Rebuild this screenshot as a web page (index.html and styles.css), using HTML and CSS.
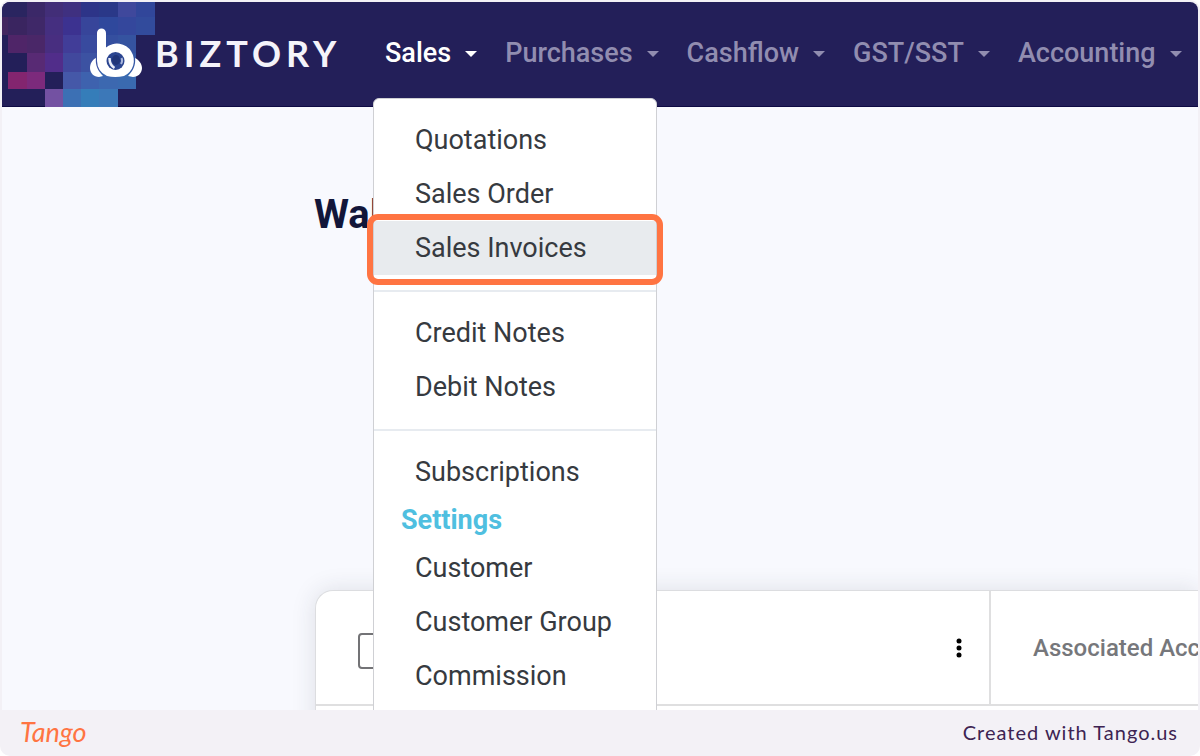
FILE: index.html
```html
<!DOCTYPE html>
<html lang="en">
<head>
<meta charset="utf-8">
<title>Biztory</title>
<meta name="viewport" content="width=device-width, initial-scale=1">
<link rel="stylesheet" href="styles.css">
</head>
<body>
<div class="frame">
  <div class="app">
    <header class="topbar">
      <a class="brand" href="#" aria-label="Biztory home">
        <svg class="brand-art" width="153" height="105" viewBox="2 2 153 105" aria-hidden="true">
          <g shape-rendering="crispEdges">
            <path fill="#2a2560" d="M2 2h25v15H2z"/><path fill="#3b2868" d="M27 2h18v15H27z"/><path fill="#422e78" d="M45 2h18v15H45z"/><path fill="#3f3080" d="M63 2h18v15H63z"/><path fill="#2d3488" d="M81 2h18v15H81z"/><path fill="#2a3888" d="M99 2h19v15H99z"/><path fill="#3f489c" d="M118 2h18v15h-18z"/><path fill="#31469a" d="M136 2h19v15h-19z"/>
            <path fill="#43265f" d="M2 17h6v18H2z"/><path fill="#3a2560" d="M8 17h19v18H8z"/><path fill="#3f2868" d="M27 17h18v18H27z"/><path fill="#452f80" d="M45 17h18v18H45z"/><path fill="#3c3290" d="M63 17h18v18H63z"/><path fill="#37459a" d="M81 17h18v18H81z"/><path fill="#2f489c" d="M99 17h19v18H99z"/><path fill="#34479c" d="M118 17h18v18h-18z"/><path fill="#324b9c" d="M136 17h19v18h-19z"/>
            <path fill="#4f2568" d="M8 35h19v18H8z"/><path fill="#4a2768" d="M27 35h18v18H27z"/><path fill="#482e80" d="M45 35h18v18H45z"/><path fill="#413d98" d="M63 35h18v18H63z"/><path fill="#384a9e" d="M81 35h18v18H81z"/><path fill="#354f9f" d="M99 35h19v18H99z"/><path fill="#3553a0" d="M118 35h18v18h-18z"/>
            <path fill="#582a74" d="M27 53h18v19H27z"/><path fill="#512d8a" d="M45 53h18v19H45z"/><path fill="#41489d" d="M63 53h18v19H63z"/><path fill="#3c52a2" d="M81 53h18v19H81z"/><path fill="#3a58a5" d="M99 53h19v19H99z"/><path fill="#3558a5" d="M118 53h18v19h-18z"/>
            <path fill="#83256f" d="M8 72h19v17H8z"/><path fill="#7c2a7c" d="M27 72h18v17H27z"/><path fill="#4558a8" d="M63 72h18v17H63z"/><path fill="#3e62ae" d="M81 72h18v17H81z"/><path fill="#3c68b0" d="M99 72h19v17H99z"/><path fill="#3a6ab0" d="M118 72h18v17h-18z"/>
            <path fill="#7351a2" d="M45 89h18v18H45z"/><path fill="#3c70b4" d="M63 89h18v18H63z"/><path fill="#357db9" d="M81 89h18v18H81z"/><path fill="#3c78b8" d="M99 89h19v18H99z"/>
          </g>
          <path fill="#fff" d="M96 58c-4 2-6 6-6 10 0 5 4 9 9 9l4-1c-5-5-8-11-7-18zM135 58c4 2 7 6 7 10 0 5-4 9-9 9l-5-1c5-5 8-11 7-18z"/>
          <path fill="#fff" d="M97 33a4.500 4.500 0 0 1 9 0v14.500a17 17 0 1 1 18 28.500q-9 2-17 0A17 17 0 0 1 97 61z"/>
          <circle cx="115.500" cy="61" r="9" fill="#2b4590"/>
          <path d="M109.500 58q0 7 5 10" fill="none" stroke="#e9edf8" stroke-width="2.500"/>
          <path d="M121.500 58q1.500 3-.5 6" fill="none" stroke="#a9b6dc" stroke-width="2"/>
          <ellipse cx="116" cy="60" rx="4" ry="5" fill="#203578"/>
        </svg>
        <span class="brand-name">BIZTORY</span>
      </a>
      <nav class="nav" aria-label="Main">
        <div class="nav-item">
          <button class="nav-button nav-button-active" type="button" aria-expanded="true">Sales<span class="caret"></span></button>
          <div class="menu">
            <a class="menu-link" href="#">Quotations</a>
            <a class="menu-link" href="#">Sales Order</a>
            <a class="menu-link menu-link-current" href="#">Sales Invoices<span class="ring"></span></a>
            <hr class="menu-rule">
            <a class="menu-link" href="#">Credit Notes</a>
            <a class="menu-link" href="#">Debit Notes</a>
            <hr class="menu-rule">
            <a class="menu-link" href="#">Subscriptions</a>
            <h2 class="menu-title">Settings</h2>
            <a class="menu-link" href="#">Customer</a>
            <a class="menu-link" href="#">Customer Group</a>
            <a class="menu-link" href="#">Commission</a>
          </div>
        </div>
        <div class="nav-item"><button class="nav-button" type="button">Purchases<span class="caret"></span></button></div>
        <div class="nav-item"><button class="nav-button" type="button">Cashflow<span class="caret"></span></button></div>
        <div class="nav-item"><button class="nav-button" type="button">GST/SST<span class="caret"></span></button></div>
        <div class="nav-item"><button class="nav-button" type="button">Accounting<span class="caret"></span></button></div>
      </nav>
    </header>
    <main class="content">
      <h1 class="page-title">Wallet</h1>
      <div class="card">
        <table class="grid">
          <thead>
            <tr>
              <th class="cell-main" scope="col">
                <div class="cell-row">
                  <input class="check" type="checkbox" aria-label="Select all">
                  <button class="more" type="button" aria-label="Column options">
                    <svg width="6" height="20" viewBox="0 0 6 20" aria-hidden="true"><circle cx="3" cy="3" r="2.500"/><circle cx="3" cy="10" r="2.500"/><circle cx="3" cy="17" r="2.500"/></svg>
                  </button>
                </div>
              </th>
              <th class="cell-account" scope="col">Associated Account</th>
            </tr>
          </thead>
        </table>
      </div>
    </main>
  </div>
  <footer class="footer">
    <span class="tango">Tango</span>
    <span class="credit">Created with Tango.us</span>
  </footer>
</div>
</body>
</html>
```
FILE: styles.css
```css
* { box-sizing: border-box; }

body {
  margin: 0;
  background: #fff;
  font-family: Roboto, "Liberation Sans", sans-serif;
}

button { border: 0; padding: 0; background: none; font: inherit; color: inherit; }

.frame {
  display: flex;
  flex-direction: column;
  height: 100vh;
  padding: 2px 2px 0;
  border-radius: 10px;
  background: #f3f1f6;
  overflow: hidden;
}

.app {
  display: flex;
  flex-direction: column;
  flex: 1;
  min-height: 0;
  border-radius: 8px 8px 0 0;
  background: #f8f9fe;
  overflow: hidden;
}

.topbar {
  position: relative;
  z-index: 1;
  display: flex;
  flex: none;
  background: #231f59;
  border-bottom: 1px solid #0e0a44;
}

.brand {
  display: flex;
  align-items: center;
  flex: none;
  width: 383px;
  color: #f4f3fa;
  text-decoration: none;
}

.brand-art { display: block; margin-bottom: -1px; }

.brand-name {
  padding-bottom: 3px;
  font-family: Lato, sans-serif;
  font-weight: 700;
  font-size: 36px;
  line-height: 40px;
  letter-spacing: 5px;
}

.nav { display: flex; gap: 28px; }
.nav-item { position: relative; display: flex; }

.nav-button {
  display: flex;
  align-items: center;
  gap: 14px;
  padding-bottom: 2px;
  color: #918db0;
  font-weight: 500;
  font-size: 27px;
  line-height: 32px;
  white-space: nowrap;
}

.nav-button-active { color: #fff; }

.caret {
  border: 6px solid transparent;
  border-top-color: currentColor;
  border-bottom: 0;
  margin-top: 2px;
}

.menu {
  position: absolute;
  top: 96px;
  left: -12px;
  width: 284px;
  height: 640px;
  padding-top: 14px;
  border: 1px solid #cfd0d4;
  border-radius: 6px;
  background: #fff;
}

.menu-link {
  position: relative;
  display: block;
  padding: 11px 41px;
  color: #363a40;
  font-size: 27px;
  line-height: 32px;
  text-decoration: none;
  white-space: nowrap;
}

.menu-link-current { background: #e8ebee; }

.ring {
  position: absolute;
  inset: -7px -7px -10px;
  border: 6px solid #ff7442;
  border-radius: 11px;
}

.menu-rule {
  height: 2px;
  margin: 15px 0 14px;
  border: 0;
  background: #e7ebf0;
}

.menu-title {
  margin: 0;
  padding: 5px 27px;
  color: #4fbfe0;
  font-weight: 700;
  font-size: 27px;
  line-height: 32px;
}

.content { flex: 1; min-height: 0; padding: 84px 0 0 312px; }

.page-title {
  margin: 0;
  color: #12163a;
  font-weight: 700;
  font-size: 40px;
  line-height: 48px;
}

.card {
  height: 200px;
  margin: 351px 0 0 1px;
  border: 1px solid #dcdde0;
  border-right: 0;
  border-radius: 18px 0 0 0;
  background: #fff;
  box-shadow: 0 0 24px rgba(40, 44, 60, 0.13);
}

.grid { width: 100%; table-layout: fixed; border-collapse: collapse; }

.grid th {
  height: 114px;
  padding: 0 27px 0 42px;
  border-bottom: 2px solid #dfdfe0;
  text-align: left;
}

.cell-main { width: 674px; border-right: 2px solid #dfdfe0; }

.cell-row { display: flex; align-items: center; justify-content: space-between; }

.check {
  appearance: none;
  width: 35px;
  height: 36px;
  margin: 6px 0 0;
  border: 2px solid #737376;
  border-radius: 4px;
  background: #fff;
}

.more svg { display: block; }

.grid .cell-account {
  color: #76777b;
  font-weight: 500;
  font-size: 24px;
  line-height: 28px;
  white-space: nowrap;
  overflow: hidden;
}

.footer {
  display: flex;
  align-items: center;
  justify-content: space-between;
  flex: none;
  height: 46px;
  padding: 0 20px 2px 18px;
}

.tango {
  color: #ff7442;
  font-family: Lato, sans-serif;
  font-style: italic;
  font-size: 27px;
  line-height: 32px;
}

.credit {
  color: #3d2352;
  font-family: Lato, sans-serif;
  font-size: 20px;
  line-height: 28px;
  letter-spacing: 1px;
}
```
